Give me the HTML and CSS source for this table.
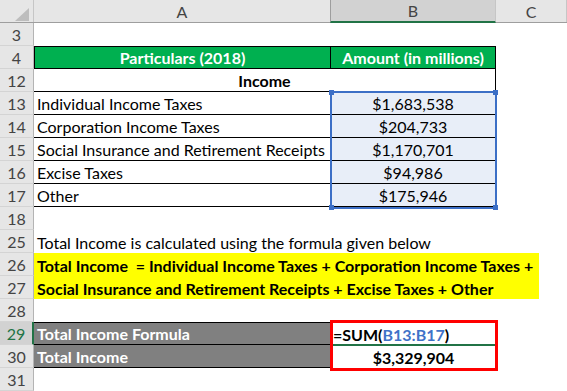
FILE: index.html
```html
<!DOCTYPE html>
<html>
<head>
<meta charset="utf-8">
<link rel="stylesheet" href="styles.css">
</head>
<body>
<div class="sheet">
  <div class="hrow">
    <div class="corner"><svg width="33" height="22" viewBox="0 0 33 22"><polygon points="29,8 29,21 15,21" fill="#bdbdbd"/></svg></div>
    <div class="ch">A</div>
    <div class="ch sel">B</div>
    <div class="ch">C</div>
  </div>

  <div class="row"><div class="rh">3</div><div class="c"></div><div class="c"></div><div class="c"></div></div>

  <div class="row">
    <div class="rh">4</div>
    <div class="c head bt bb br bl center">Particulars (2018)</div>
    <div class="c head bt bb br center">Amount (in millions)</div>
    <div class="c"></div>
  </div>

  <div class="row">
    <div class="rh">12</div>
    <div class="c merge bb br bold center">Income</div>
    <div class="c"></div>
  </div>

  <div class="row">
    <div class="rh">13</div>
    <div class="c bb br">Individual Income Taxes</div>
    <div class="c bb br tint center">$1,683,538</div>
    <div class="c"></div>
  </div>
  <div class="row">
    <div class="rh">14</div>
    <div class="c bb br">Corporation Income Taxes</div>
    <div class="c bb br tint center">$204,733</div>
    <div class="c"></div>
  </div>
  <div class="row">
    <div class="rh">15</div>
    <div class="c bb br">Social Insurance and Retirement Receipts</div>
    <div class="c bb br tint center">$1,170,701</div>
    <div class="c"></div>
  </div>
  <div class="row">
    <div class="rh">16</div>
    <div class="c bb br">Excise Taxes</div>
    <div class="c bb br tint center">$94,986</div>
    <div class="c"></div>
  </div>
  <div class="row">
    <div class="rh">17</div>
    <div class="c bb br">Other</div>
    <div class="c bb br tint center">$175,946</div>
    <div class="c"></div>
  </div>

  <div class="row"><div class="rh">18</div><div class="c"></div><div class="c"></div><div class="c"></div></div>

  <div class="row">
    <div class="rh">25</div>
    <div class="c span3">Total Income is calculated using the formula given below</div>
  </div>
  <div class="row">
    <div class="rh">26</div>
    <div class="c span3 yl">Total Income &nbsp;= Individual Income Taxes + Corporation Income Taxes +</div>
  </div>
  <div class="row">
    <div class="rh">27</div>
    <div class="c span3 yl">Social Insurance and Retirement Receipts + Excise Taxes + Other</div>
  </div>

  <div class="row"><div class="rh">28</div><div class="c"></div><div class="c"></div><div class="c"></div></div>

  <div class="row">
    <div class="rh act">29</div>
    <div class="c grey bt bb br">Total Income Formula</div>
    <div class="c bold formula">=SUM(<span class="ref">B13:B17</span>)</div>
    <div class="c"></div>
  </div>
  <div class="row">
    <div class="rh">30</div>
    <div class="c grey bb br">Total Income</div>
    <div class="c bold center">$3,329,904</div>
    <div class="c"></div>
  </div>
  <div class="row"><div class="rh">31</div><div class="c"></div><div class="c"></div><div class="c"></div></div>

  <div class="rangebox">
    <span class="hd tl"></span><span class="hd tr"></span><span class="hd bl2"></span><span class="hd br2"></span>
  </div>
  <div class="activeline"></div>
  <div class="redbox"></div>
</div>
</body>
</html>
```

FILE: styles.css
```css
html, body {
  margin: 0;
  padding: 0;
  background: #ffffff;
}
.sheet {
  position: relative;
  width: 567px;
  height: 391px;
  overflow: hidden;
  font-family: Lato, "Open Sans", sans-serif;
  font-size: 16px;
  color: #000;
}
.hrow, .row {
  display: grid;
  grid-template-columns: 34px 297px 165px 71px;
  height: 23px;
}
.hrow {
  background: #e6e6e6;
  border-bottom: 1px solid #9e9e9e;
  height: 23px;
  box-sizing: border-box;
}
.corner {
  border-right: 1px solid #c6c6c6;
  height: 22px;
}
.corner svg { display: block; }
.ch {
  display: flex;
  align-items: center;
  justify-content: center;
  color: #444;
  font-size: 16px;
  border-right: 1px solid #c6c6c6;
  height: 22px;
  box-sizing: border-box;
}
.ch.sel {
  background: #d2d2d2;
  border-left: 1px solid #9e9e9e;
  margin-left: -1px;
  border-bottom: 2px solid #217346;
  height: 23px;
  margin-bottom: -1px;
}
.rh {
  background: #e6e6e6;
  border-right: 1px solid #b4b4b4;
  border-bottom: 1px solid #d4d4d4;
  box-sizing: border-box;
  color: #444;
  display: flex;
  align-items: center;
  justify-content: center;
  font-size: 16px;
}
.rh.act {
  background: #d2d2d2;
  color: #217346;
  border-right: 2px solid #217346;
}
.c {
  box-sizing: border-box;
  display: flex;
  align-items: flex-end;
  padding: 0 3px 1px;
  line-height: 19px;
  white-space: nowrap;
  min-width: 0;
}
.center { justify-content: center; }
.bold { font-weight: 700; }
.bt { border-top: 1px solid #000; }
.bb { border-bottom: 1px solid #000; }
.br { border-right: 1px solid #000; }
.bl { border-left: 1px solid #000; }
.head {
  background: #00b050;
  color: #fff;
  font-weight: 700;
}
.merge { grid-column: 2 / 4; }
.span3 { grid-column: 2 / 5; }
.tint { background: #e8eef8; }
.yl {
  background: #ffff00;
  font-weight: 700;
  width: 505px;
}
.grey {
  background: #808080;
  color: #fff;
  font-weight: 700;
}
.formula { padding-left: 2px; }
.ref { color: #3f72c8; }

.rangebox {
  position: absolute;
  left: 330px;
  top: 91px;
  width: 167px;
  height: 118px;
  box-sizing: border-box;
  border: 2px solid #3c6fc6;
}
.hd {
  position: absolute;
  width: 5px;
  height: 5px;
  background: #3c6fc6;
}
.tl { left: -3px; top: -3px; }
.tr { right: -3px; top: -3px; }
.bl2 { left: -3px; bottom: -3px; }
.br2 { right: -3px; bottom: -3px; }

.activeline {
  position: absolute;
  left: 331px;
  top: 344px;
  width: 164px;
  height: 2px;
  background: #217346;
}
.redbox {
  position: absolute;
  left: 330px;
  top: 320px;
  width: 168px;
  height: 51px;
  box-sizing: border-box;
  border: 3px solid #ff0000;
}
```
